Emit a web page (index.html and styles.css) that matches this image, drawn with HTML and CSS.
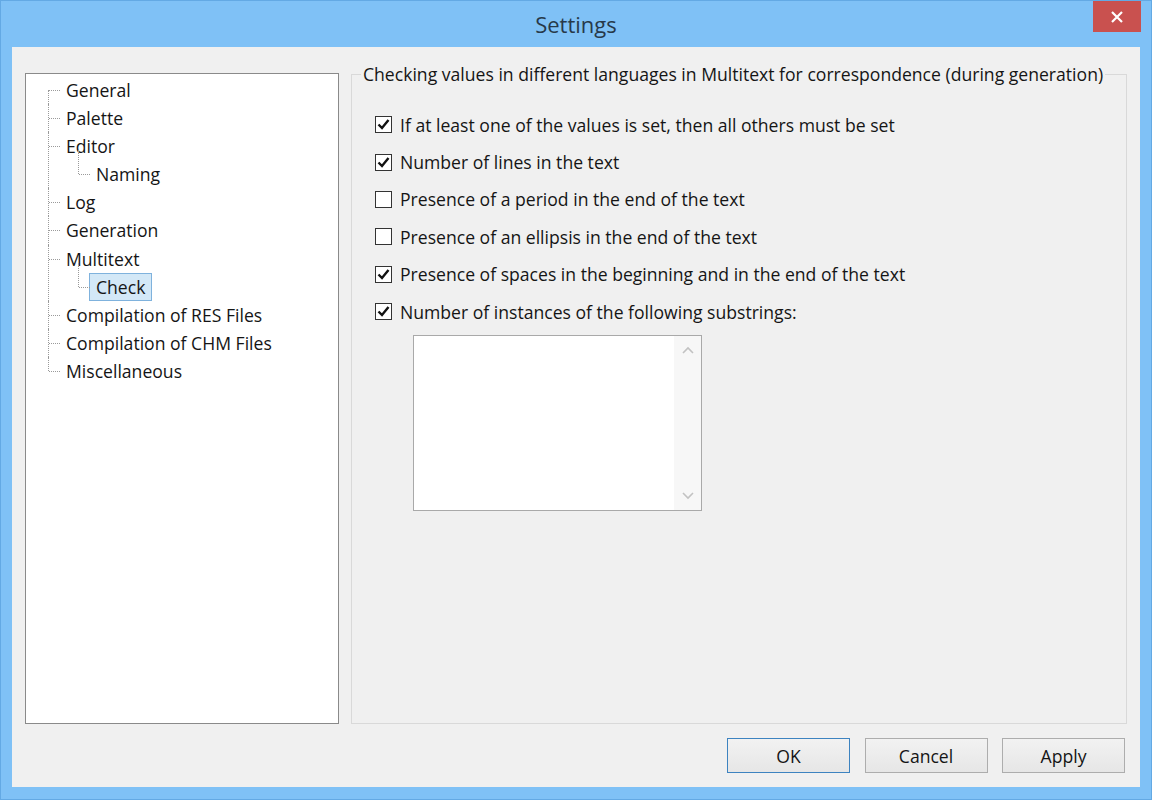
FILE: index.html
```html
<!DOCTYPE html>
<html lang="en">
<head>
  <meta charset="UTF-8" />
  <title>Settings</title>
  <link rel="stylesheet" href="styles.css">
</head>
<body>
  <div class="window">
    <!-- Title Bar -->
    <div class="title-bar">
      <span></span>
      <div class="title">Settings</div>
      <div class="close-btn">
        <svg width="14" height="14" viewBox="0 0 14 14">
          <path d="M2 2 L12 12 M12 2 L2 12" stroke="#fff" stroke-width="2.2" fill="none"/>
        </svg>
      </div>
    </div>

    <!-- Client Area -->
    <div class="client">
      <div class="main">
        <div class="tree-box">
          <ul class="tree">
            <li><span class="node">General</span></li>
            <li><span class="node">Palette</span></li>
            <li><span class="node">Editor</span>
              <ul>
                <li><span class="node">Naming</span></li>
              </ul>
            </li>
            <li><span class="node">Log</span></li>
            <li><span class="node">Generation</span></li>
            <li><span class="node">Multitext</span>
              <ul>
                <li><span class="node selected">Check</span></li>
              </ul>
            </li>
            <li><span class="node">Compilation of RES Files</span></li>
            <li><span class="node">Compilation of CHM Files</span></li>
            <li class="last"><span class="node">Miscellaneous</span></li>
          </ul>
        </div>

        <fieldset class="group">
          <legend>Checking values in different languages in Multitext for correspondence (during generation)</legend>
          <div class="options">
            <label class="option"><span class="box checked"><svg width="15" height="15" viewBox="0 0 15 15"><path d="M2.5 7.5 L6 11 L12.5 3" stroke="#111" stroke-width="2.4" fill="none"/></svg></span>If at least one of the values is set, then all others must be set</label>
            <label class="option"><span class="box checked"><svg width="15" height="15" viewBox="0 0 15 15"><path d="M2.5 7.5 L6 11 L12.5 3" stroke="#111" stroke-width="2.4" fill="none"/></svg></span>Number of lines in the text</label>
            <label class="option"><span class="box"></span>Presence of a period in the end of the text</label>
            <label class="option"><span class="box"></span>Presence of an ellipsis in the end of the text</label>
            <label class="option"><span class="box checked"><svg width="15" height="15" viewBox="0 0 15 15"><path d="M2.5 7.5 L6 11 L12.5 3" stroke="#111" stroke-width="2.4" fill="none"/></svg></span>Presence of spaces in the beginning and in the end of the text</label>
            <label class="option"><span class="box checked"><svg width="15" height="15" viewBox="0 0 15 15"><path d="M2.5 7.5 L6 11 L12.5 3" stroke="#111" stroke-width="2.4" fill="none"/></svg></span>Number of instances of the following substrings:</label>

            <div class="listbox">
              <div class="list-area"></div>
              <div class="scrollbar">
                <svg width="12" height="8" viewBox="0 0 12 8"><path d="M1 7 L6 2 L11 7" stroke="#c2c2c2" stroke-width="1.6" fill="none"/></svg>
                <svg width="12" height="8" viewBox="0 0 12 8"><path d="M1 1 L6 6 L11 1" stroke="#c2c2c2" stroke-width="1.6" fill="none"/></svg>
              </div>
            </div>
          </div>
        </fieldset>
      </div>

      <div class="buttons">
        <button class="btn default">OK</button>
        <button class="btn">Cancel</button>
        <button class="btn">Apply</button>
      </div>
    </div>
  </div>
</body>
</html>
```

FILE: styles.css
```css
html, body {
  margin: 0;
  padding: 0;
}

body {
  font-family: "Open Sans", "Noto Sans", sans-serif;
  font-size: 17.6px;
  color: #151515;
}

.window {
  width: 1152px;
  height: 800px;
  box-sizing: border-box;
  background: #7fc1f6;
  border: 1px solid #63a9e4;
  padding: 0 11px 12px 11px;
  display: flex;
  flex-direction: column;
}

/* Title Bar */
.title-bar {
  height: 46px;
  display: grid;
  grid-template-columns: 1fr auto 1fr;
  align-items: start;
}

.title {
  font-size: 22px;
  color: #27394a;
  line-height: 46px;
}

.close-btn {
  justify-self: end;
  width: 48px;
  height: 31px;
  margin-right: -1px;
  background: #c9514f;
  display: flex;
  align-items: center;
  justify-content: center;
}

/* Client */
.client {
  flex: 1;
  background: #f0f0f0;
  padding: 26px 13px 14px 13px;
  display: flex;
  flex-direction: column;
}

.main {
  display: flex;
  gap: 12px;
  height: 651px;
}

.tree-box {
  width: 314px;
  box-sizing: border-box;
  background: #fff;
  border: 1px solid #8a8a8a;
}

.tree,
.tree ul {
  list-style: none;
  margin: 0;
  padding: 0;
}

.tree {
  padding: 2px 0 0 33px;
}

.tree li {
  position: relative;
  line-height: 28.1px;
}

.tree ul {
  padding-left: 30px;
}

.node {
  display: inline-block;
  height: 28.1px;
  box-sizing: border-box;
  padding: 0 6px;
  border: 1px solid transparent;
  line-height: 26px;
  vertical-align: top;
}

.node.selected {
  background: #d3e8f7;
  border-color: #7fb2dd;
}

/* dotted tree connectors */
.tree > li::before {
  content: "";
  position: absolute;
  left: -11px;
  top: 0;
  bottom: 0;
  border-left: 1px dotted #9a9a9a;
}

.tree > li:first-child::before {
  top: 14px;
}

.tree > li.last::before {
  bottom: auto;
  height: 14px;
}

.tree li::after {
  content: "";
  position: absolute;
  left: -10px;
  top: 14px;
  width: 11px;
  border-top: 1px dotted #9a9a9a;
}

.tree ul li::before {
  content: "";
  position: absolute;
  left: -11px;
  top: -10px;
  height: 24px;
  border-left: 1px dotted #9a9a9a;
}

/* Group Box */
.group {
  flex: 1;
  margin: -11px 0 0 0;
  padding: 0;
  border: 1px solid #d9d9d9;
  min-width: 0;
}

.group legend {
  margin-left: 9px;
  padding: 0 2px;
  line-height: 24px;
}

.options {
  padding: 20px 0 0 23px;
}

.option {
  display: flex;
  align-items: center;
  height: 37.4px;
}

.box {
  width: 17px;
  height: 17px;
  box-sizing: border-box;
  border: 1px solid #333;
  background: #fff;
  margin-right: 8px;
  display: flex;
  align-items: center;
  justify-content: center;
}

/* Listbox */
.listbox {
  margin: 5px 0 0 38px;
  width: 289px;
  height: 176px;
  box-sizing: border-box;
  border: 1px solid #a9a9a9;
  background: #fff;
  display: flex;
}

.list-area {
  flex: 1;
}

.scrollbar {
  width: 27px;
  background: #f7f7f7;
  display: flex;
  flex-direction: column;
  justify-content: space-between;
  align-items: center;
  padding: 10px 0 10px;
}

/* Buttons */
.buttons {
  display: flex;
  justify-content: flex-end;
  gap: 14.5px;
  margin: 14px 2px 0 0;
}

.btn {
  width: 123px;
  height: 35px;
  font-family: "Open Sans", "Noto Sans", sans-serif;
  font-size: 17.6px;
  color: #151515;
  background: linear-gradient(#f2f2f2, #e6e6e6);
  border: 1px solid #adadad;
  padding: 0;
}

.btn.default {
  border-color: #3d83c0;
}
```
